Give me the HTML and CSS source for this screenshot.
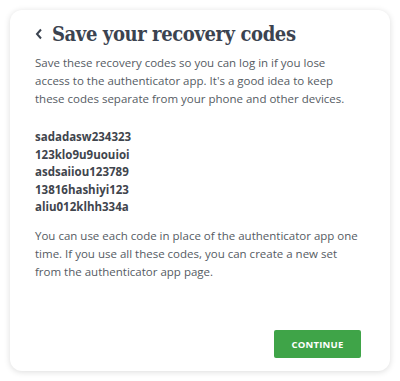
FILE: index.html
```html
<!DOCTYPE html>
<html>
<head>
<meta charset="utf-8">
<link rel="stylesheet" href="styles.css">
</head>
<body>
<div class="card">
  <div class="header">
    <svg class="back" width="8" height="12" viewBox="0 0 8 12"><path d="M6 1.5 L2 6 L6 10.5" fill="none" stroke="#3b4350" stroke-width="2"/></svg>
    <h1 class="title">Save your recovery codes</h1>
  </div>
  <p class="text">Save these recovery codes so you can log in if you lose access to the authenticator app. It's a good idea to keep these codes separate from your phone and other devices.</p>
  <ul class="codes">
    <li>sadadasw234323</li>
    <li>123klo9u9uouioi</li>
    <li>asdsaiiou123789</li>
    <li>13816hashiyi123</li>
    <li>aliu012klhh334a</li>
  </ul>
  <p class="text">You can use each code in place of the authenticator app one time. If you use all these codes, you can create a new set from the authenticator app page.</p>
  <div class="actions">
    <button class="continue">CONTINUE</button>
  </div>
</div>
</body>
</html>
```
FILE: styles.css
```css
html, body { margin: 0; padding: 0; background: #fff; }
body { padding: 10px; box-sizing: border-box; width: 400px; height: 381px; font-family: "Open Sans", sans-serif; }
.card {
  box-sizing: border-box;
  width: 380px;
  height: 361px;
  background: #fff;
  border-radius: 12px;
  box-shadow: 0 1px 6px rgba(0,0,0,0.14);
  padding: 10px 30px 13px 25px;
  display: flex;
  flex-direction: column;
}
.header { display: flex; align-items: center; gap: 9px; height: 28px; }
.back { flex: none; }
.title {
  margin: 0;
  font-family: "DejaVu Serif Condensed", "DejaVu Serif", serif;
  font-stretch: condensed;
  font-weight: bold;
  font-size: 20px;
  letter-spacing: -0.4px;
  color: #3b4350;
}
.text {
  margin: 6px 0 0;
  font-size: 11.5px;
  line-height: 18px;
  color: #555b63;
}
.codes {
  list-style: none;
  margin: 20px 0 0;
  padding: 0;
  font-size: 11.5px;
  font-weight: bold;
  line-height: 17.6px;
  color: #3f454d;
}
.codes + .text { margin-top: 11px; }
.actions { margin-top: auto; margin-right: -1px; display: flex; justify-content: flex-end; }
.continue {
  width: 87px;
  height: 28px;
  border: none;
  border-radius: 2px;
  background: #3fa448;
  color: #fff;
  font-family: "Open Sans", sans-serif;
  font-weight: bold;
  font-size: 9.5px;
  letter-spacing: 0.2px;
}
```
